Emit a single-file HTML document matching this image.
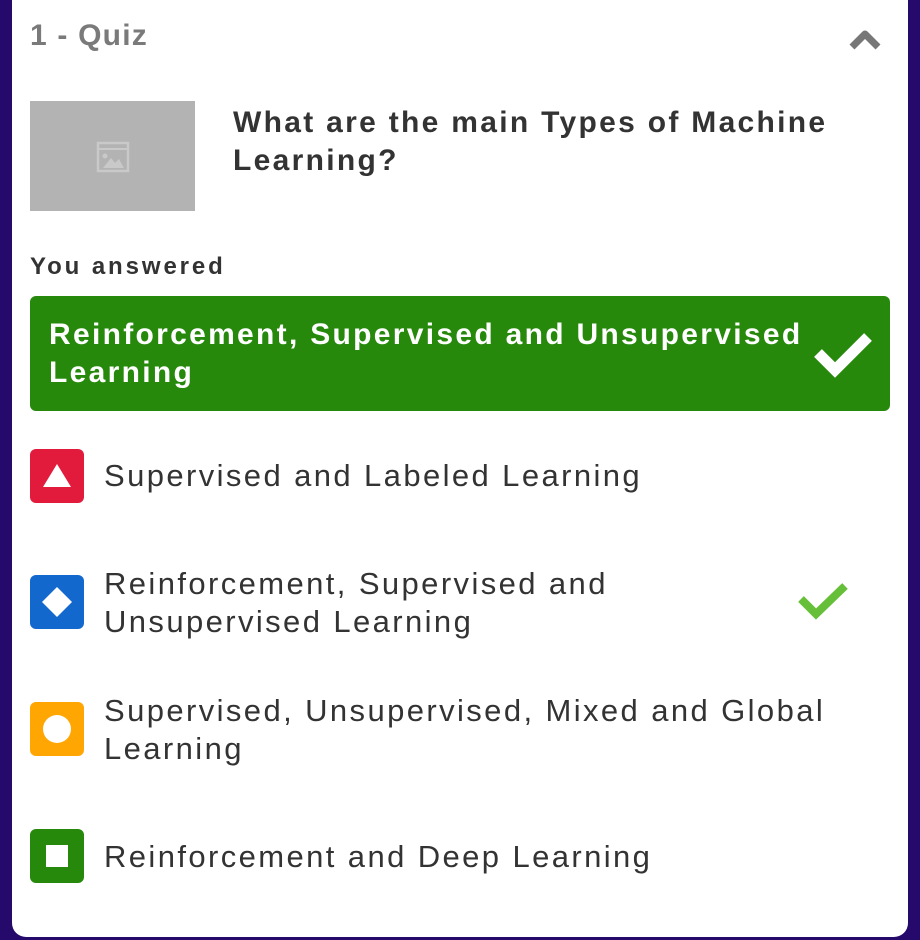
<!DOCTYPE html>
<html><head><meta charset="utf-8"><style>
html,body{margin:0;padding:0;width:920px;height:940px;background:#25096b;overflow:hidden;font-family:"Liberation Sans",sans-serif;}
.card{position:absolute;left:12px;top:-20px;width:896px;height:957px;background:#fff;border-radius:14px;}
.a{position:absolute;white-space:nowrap;line-height:1;}
.t{font-size:31px;color:#333;letter-spacing:2.4px;}
.b{font-weight:bold;}
.ic{position:absolute;left:30px;width:54px;height:54px;border-radius:6px;}
</style></head><body>
<div class="card"></div>
<div class="a b" style="left:30px;top:21px;font-size:30px;color:#7a7a7a;letter-spacing:1.2px;">1 - Quiz</div>
<svg class="a" style="left:848px;top:28px" width="34" height="24" viewBox="0 0 34 24"><path d="M4 19 L17 6 L30 19" fill="none" stroke="#777" stroke-width="7" stroke-linejoin="round"/></svg>
<div class="a" style="left:30px;top:101px;width:165px;height:110px;background:#b3b3b3;"></div>
<svg class="a" style="left:96px;top:141px" width="34" height="32" viewBox="0 0 34 32"><rect x="2" y="2" width="30" height="28" fill="none" stroke="#c9c9c9" stroke-width="2.5"/><line x1="2" y1="8" x2="32" y2="8" stroke="#c9c9c9" stroke-width="2"/><circle cx="9" cy="15" r="2.5" fill="#c9c9c9"/><path d="M7 27 L15 17 L19 22 L23 18 L28 27Z" fill="#c9c9c9"/></svg>
<div class="a b" style="left:233px;top:108px;font-size:30px;color:#333;letter-spacing:2.3px;">What are the main Types of Machine</div>
<div class="a b" style="left:233px;top:146px;font-size:30px;color:#333;letter-spacing:2.3px;">Learning?</div>
<div class="a b" style="left:30px;top:255px;font-size:24px;color:#333;letter-spacing:2.9px;">You answered</div>
<div class="a" style="left:30px;top:296px;width:860px;height:115px;background:#26890c;border-radius:6px;"></div>
<div class="a b" style="left:49px;top:320px;font-size:30px;color:#fff;letter-spacing:2.3px;">Reinforcement, Supervised and Unsupervised</div>
<div class="a b" style="left:49px;top:358px;font-size:30px;color:#fff;letter-spacing:2.3px;">Learning</div>
<svg class="a" style="left:810px;top:328px" width="66" height="52" viewBox="0 0 66 52"><path d="M8 25 L25 42 L58 9" fill="none" stroke="#fff" stroke-width="11"/></svg>
<div class="ic" style="top:449px;background:#e21b3c;"><svg width="54" height="54"><path d="M27 15 L41 38 L13 38Z" fill="#fff"/></svg></div>
<div class="a t" style="left:104px;top:460px;">Supervised and Labeled Learning</div>
<div class="ic" style="top:575px;background:#1368ce;"><svg width="54" height="54"><path d="M27 12 L42 27 L27 42 L12 27Z" fill="#fff"/></svg></div>
<div class="a t" style="left:104px;top:568px;">Reinforcement, Supervised and</div>
<div class="a t" style="left:104px;top:606px;">Unsupervised Learning</div>
<svg class="a" style="left:795px;top:578px" width="60" height="46" viewBox="0 0 60 46"><path d="M6 21 L21 36 L50 8" fill="none" stroke="#66bf39" stroke-width="8"/></svg>
<div class="ic" style="top:702px;background:#ffa602;"><svg width="54" height="54"><circle cx="27" cy="27" r="14" fill="#fff"/></svg></div>
<div class="a t" style="left:104px;top:695px;">Supervised, Unsupervised, Mixed and Global</div>
<div class="a t" style="left:104px;top:733px;">Learning</div>
<div class="ic" style="top:829px;background:#26890c;"><svg width="54" height="54"><rect x="16" y="16" width="22" height="22" fill="#fff"/></svg></div>
<div class="a t" style="left:104px;top:841px;">Reinforcement and Deep Learning</div>
</body></html>
